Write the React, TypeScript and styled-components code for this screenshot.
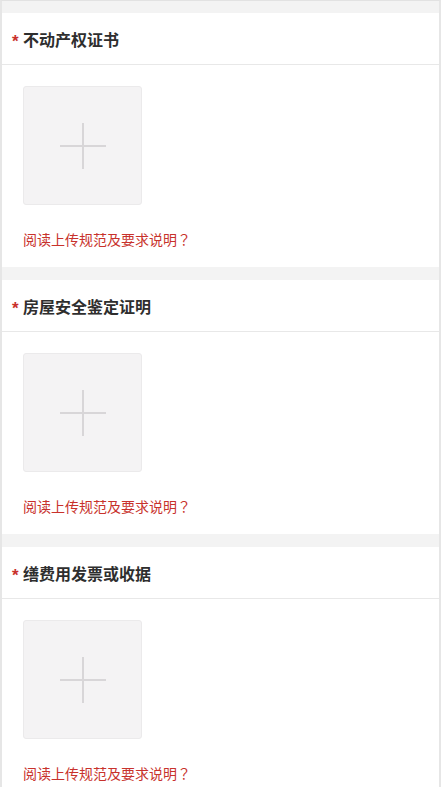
import React from 'react';
import styled, { createGlobalStyle } from 'styled-components';

const GlobalStyle = createGlobalStyle`
  html, body {
    margin: 0;
    padding: 0;
    background: #fff;
  }
  body {
    font-family: "Liberation Sans", "Noto Sans CJK SC", sans-serif;
  }
`;

const sections = [
  { title: '不动产权证书' },
  { title: '房屋安全鉴定证明' },
  { title: '缮费用发票或收据' },
];

export default function App() {
  return <>
    <GlobalStyle />
    <Page>
      {sections.map((s, i) => (
        <Card key={i}>
          <Header>
            <Star>*</Star>
            <Title>{s.title}</Title>
          </Header>
          <Body>
            <UploadBox>
              <svg width="48" height="48" viewBox="0 0 48 48">
                <rect x="23" y="1" width="2" height="46" fill="#d8d6d8" />
                <rect x="1" y="23" width="46" height="2" fill="#d8d6d8" />
              </svg>
            </UploadBox>
            <HelpLink>阅读上传规范及要求说明？</HelpLink>
          </Body>
        </Card>
      ))}
    </Page>
  </>;
}

const Page = styled.div`
  width: 437px;
  min-height: 787px;
  background: #f3f3f3;
  border-top: 1px solid #e2e2e2;
  border-left: 2px solid #e6e6e6;
  border-right: 2px solid #e6e6e6;
  padding-top: 12px;
  box-sizing: content-box;
  display: flex;
  flex-direction: column;
  gap: 13px;
`;

const Card = styled.section`
  background: #fff;
`;

const Header = styled.div`
  height: 52px;
  border-bottom: 1px solid #e8e8e8;
  display: flex;
  align-items: center;
  padding-left: 10px;
  box-sizing: border-box;
`;

const Star = styled.span`
  color: #c9302c;
  font-size: 17px;
  font-weight: bold;
  width: 11px;
  margin-top: 6px;
`;

const Title = styled.h3`
  margin: 0;
  font-size: 16px;
  font-weight: bold;
  color: #2e2e2e;
  font-family: "Noto Sans CJK SC", sans-serif;
`;

const Body = styled.div`
  padding: 21px 21px 18px;
  display: flex;
  flex-direction: column;
  align-items: flex-start;
`;

const UploadBox = styled.div`
  width: 119px;
  height: 119px;
  box-sizing: border-box;
  background: #f4f3f4;
  border: 1px solid #ebeaeb;
  border-radius: 3px;
  display: flex;
  align-items: center;
  justify-content: center;
`;

const HelpLink = styled.a`
  margin-top: 24px;
  font-size: 14px;
  line-height: 20px;
  color: #c8322c;
  font-family: "Noto Sans CJK TC", "Noto Sans CJK SC", sans-serif;
  cursor: pointer;
`;
